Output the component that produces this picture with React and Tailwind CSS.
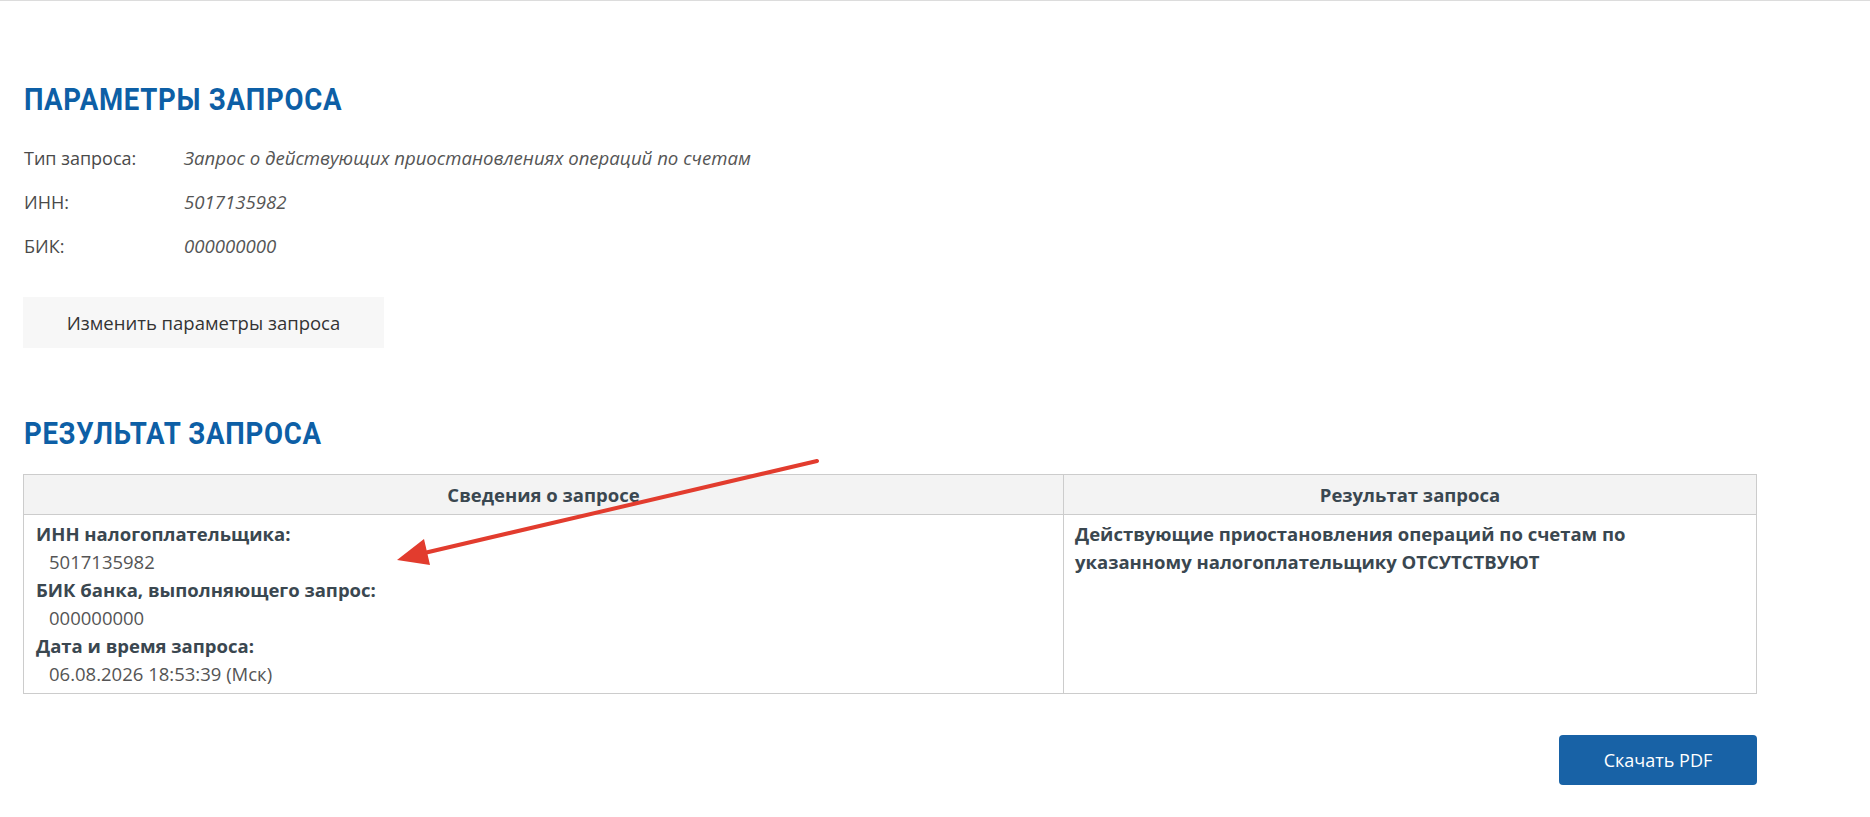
const params = [
  { label: "Тип запроса:", value: "Запрос о действующих приостановлениях операций по счетам" },
  { label: "ИНН:", value: "5017135982" },
  { label: "БИК:", value: "000000000" },
];

const details = [
  { label: "ИНН налогоплательщика:", value: "5017135982" },
  { label: "БИК банка, выполняющего запрос:", value: "000000000" },
  { label: "Дата и время запроса:", value: "06.08.2026 18:53:39 (Мск)" },
];

function SectionTitle({ children, className = "" }) {
  return (
    <h2
      className={`origin-left scale-x-[0.89] text-[31px] leading-[36px] font-bold uppercase tracking-[0.8px] text-[#0d5fa6] font-['Roboto',sans-serif] ${className}`}
    >
      {children}
    </h2>
  );
}

function Arrow() {
  return (
    <svg
      className="absolute left-0 top-0 pointer-events-none"
      width="1870"
      height="817"
      viewBox="0 0 1870 817"
    >
      <line x1="817" y1="460" x2="420" y2="553" stroke="#e23c2e" strokeWidth="4" strokeLinecap="round" />
      <polygon points="397,559 430,564 424,538" fill="#e23c2e" />
    </svg>
  );
}

export default function App() {
  return (
    <div className="relative min-h-[817px] bg-white border-t border-[#dcdcdc] font-['Open_Sans',sans-serif] text-[#444]">
      <div className="w-[1734px] ml-[23px] pt-[81px]">
        <SectionTitle className="pl-px">Параметры запроса</SectionTitle>

        <div className="mt-[28px] flex flex-col gap-[20px] pl-px">
          {params.map((p) => (
            <div key={p.label} className="flex text-[18px] leading-[24px]">
              <span className="w-[160px] text-[#4a4a4a]">{p.label}</span>
              <span className="italic text-[18.6px] text-[#555]">{p.value}</span>
            </div>
          ))}
        </div>

        <button className="mt-[39px] w-[361px] h-[51px] bg-[#f7f7f7] text-[18.5px] text-[#333]">
          Изменить параметры запроса
        </button>

        <SectionTitle className="mt-[68px] pl-px">Результат запроса</SectionTitle>

        <table className="mt-[22px] w-full border-collapse border border-[#cccccc] text-[18.5px] text-[#3a4750]">
          <thead>
            <tr className="bg-[#f3f3f3] h-[40px]">
              <th className="w-[1040px] border border-[#cccccc] font-bold">Сведения о запросе</th>
              <th className="border border-[#cccccc] font-bold">Результат запроса</th>
            </tr>
          </thead>
          <tbody>
            <tr>
              <td className="align-top border border-[#cccccc] px-[12px] pt-[5px] pb-[5px] leading-[28px]">
                {details.map((d) => (
                  <div key={d.label}>
                    <div className="font-bold">{d.label}</div>
                    <div className="pl-[13px] text-[#555]">{d.value}</div>
                  </div>
                ))}
              </td>
              <td className="align-top border border-[#cccccc] px-[11px] pt-[5px] leading-[28px] font-bold">
                Действующие приостановления операций по счетам по
                <br />
                указанному налогоплательщику ОТСУТСТВУЮТ
              </td>
            </tr>
          </tbody>
        </table>

        <div className="mt-[41px] flex justify-end">
          <button className="w-[198px] h-[50px] rounded-[4px] bg-[#1862a6] text-white text-[18px]">
            Скачать PDF
          </button>
        </div>
      </div>

      <Arrow />
    </div>
  );
}
